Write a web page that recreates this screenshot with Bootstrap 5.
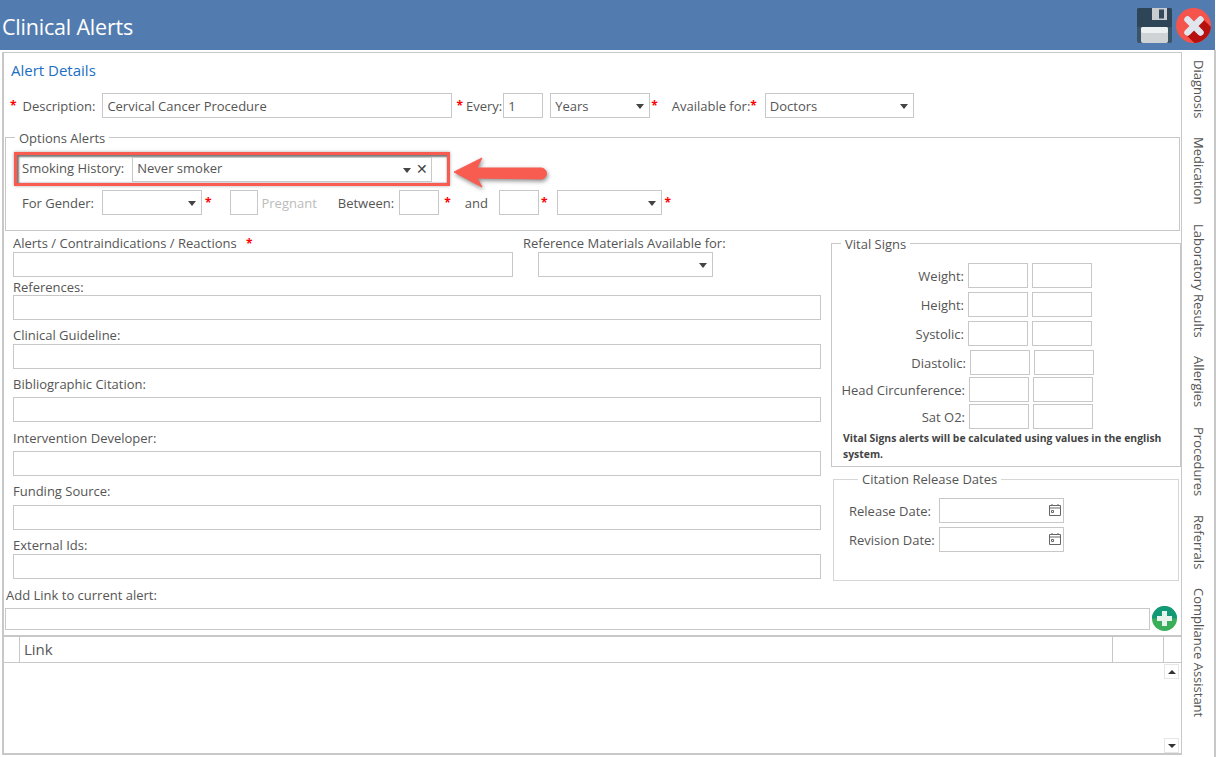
<!DOCTYPE html>
<html lang="en"><head><meta charset="utf-8"><title>Clinical Alerts</title>
<link href="https://cdn.jsdelivr.net/npm/bootstrap@5.3.0/dist/css/bootstrap.min.css" rel="stylesheet">
<style>
html,body{height:757px;overflow:hidden}
body{background:#fff;font-family:"Open Sans","Noto Sans",sans-serif;font-size:13px;color:#555;width:1216px;position:relative}
.top-bar{height:50px;width:1215px;background:#527cb0;color:#fff;font-size:21.5px;padding-left:2px}
.top-title{line-height:53px;letter-spacing:-.2px}
.top-icons{gap:4px;padding:8px 4px 0 0}
.work{height:707px}
.panel{width:1180px;height:703px;margin:2px 0 0 2px;border:1px solid #c8c8c8;border-bottom:2px solid #c8c8c8;border-left-width:2px;position:relative;flex:none}
.side{width:34px;height:707px;border-right:2px solid #c8c8c8;padding-top:10px;gap:19px;font-size:13px;line-height:30px;flex:none}
.side span{writing-mode:vertical-rl;display:block;width:30px;margin-left:2px}
.head-link{color:#1b6ec2;font-size:15px;margin:7px 0 0 7px;height:20px;line-height:20px}
.fx{display:flex;align-items:center;white-space:nowrap}
.fx>span:not(.req){margin-top:2px}
.fld{border:1px solid #c8c8c8;background:#fff;height:25px;line-height:25px;padding-left:4px;position:relative;flex:none;color:#555}
.caret::after{content:"";position:absolute;right:5px;top:10px;border:4px solid transparent;border-top:5px solid #444;border-bottom:0}
.req{color:#f00;font-weight:700;font-size:12px;line-height:14px;flex:none}
.row1{margin:13px 0 0 5px;height:25px}
.group-box{border:1px solid #c8c8c8;position:relative}
.box-title{position:absolute;top:-8px;background:#fff;padding:0 4px;line-height:16px;white-space:nowrap}
.opts{margin:19px 0 0 1px;width:1175px;height:94px}
.hl-row{position:relative;width:436px;height:34px;margin:14px 0 0 8px;border:3px solid #f85c50;box-shadow:inset 1px 1px 2px 1px #777,0 0 3px #aaa;padding-left:5px}
.hl-row>span:not(.req){margin-top:0}
.hl-row .fld{height:25px;line-height:21px;margin-left:8px;width:300px}
.x-mark{position:absolute;right:3px;top:0;font-size:14px;color:#444}
.caret-b::after{right:20px}
.row2{margin:4px 0 0 16px;height:25px}
.arrow{position:absolute;left:449px;top:102px;filter:drop-shadow(1px 2px 2px rgba(0,0,0,.45))}
.left-col{width:826px;flex:none;position:relative;padding-left:9px}
.lab{height:15px;line-height:15px}
.wide{width:808px}
.right-col{margin-left:1px;flex:none}
.vit{width:350px;height:224px;margin-top:12px;padding-top:19px}
.vit-row{height:25px;justify-content:flex-end;width:260px;margin-bottom:4px}
.vit-row .fld{width:60px;margin-left:4px}
.vit-d{width:262px;margin-bottom:2px}
.vit-h{width:261px;margin-bottom:2px}
.note{font-size:10.4px;font-weight:700;color:#444;line-height:15.500px;margin:0 0 0 11px;width:330px}
.cit{width:346px;height:102px;margin:12px 0 0 2px;padding:18px 0 0 15px;border-color:#d6d6d6}
.cit .box-title{top:-9px}
.date-row{height:25px;margin-bottom:4px}
.date-row .fld{width:125px}
.cal{position:absolute;right:1px;top:4px}
.add-lab{margin:6px 0 0 2px;height:16px;line-height:16px}
.add-row{margin:3px 0 0 1px;height:25px}
.add-row .fld{width:1145px;height:22px}
.tbl{margin:4px 0 0 0;width:1177px;height:120px;border-top:2px solid #c8c8c8;position:relative}
.tbl-h{height:26px;border-bottom:1px solid #c8c8c8;font-size:15px}
.cell{height:25px;line-height:25px;border-right:1px solid #c8c8c8;flex:none}
.c1{width:16px}.c2{width:1093px;padding-left:4px}.c3{width:51px}
.sb{position:absolute;right:2px;width:15px;height:15px;border:1px solid #e6e6e6;background:#fff}
.sb::after{content:"";position:absolute;left:3px;top:5px;border:4px solid transparent;border-top:0;border-bottom:4px solid #333}
.sb-up{top:27px}
.sb-dn{bottom:2px}
.sb-dn::after{border-bottom:0;border-top:4px solid #333}
.w350{width:350px}.w40{width:40px}.w100{width:100px}.w149{width:149px}.w28{width:28px}.w105{width:105px}.w500{width:500px}.w175{width:175px}
.ml1{margin-left:1px}.ml2{margin-left:2px}.ml3{margin-left:3px}.ml4{margin-left:4px}.ml5{margin-left:5px}.ml6{margin-left:6px}.ml7{margin-left:7px}.ml8{margin-left:8px}.ml9{margin-left:9px}.ml10{margin-left:10px}.ml11{margin-left:11px}.ml14{margin-left:14px}.ml19{margin-left:19px}.ml21{margin-left:21px}
.t0{margin-top:0}.t1{margin-top:1px}.t3{margin-top:3px}.t5{margin-top:5px}.t6{margin-top:6px}.t8{margin-top:8px}.t9{margin-top:9px}
.muted-lab{color:#bbb}
.ref-lab{position:absolute;left:519px;top:5px}
.ref-sel{position:absolute;left:534px;top:21px}
</style></head>
<body>
<div class="top-bar d-flex justify-content-between">
  <div class="top-title">Clinical Alerts</div>
  <div class="top-icons d-flex align-items-start">
    <svg width="35" height="35" viewBox="0 0 35 35"><rect width="35" height="35" rx="2" fill="#3a5568"/><path d="M2 0h13v12h15V0h3a2 2 0 0 1 2 2v17H0V2a2 2 0 0 1 2-2z" fill="#2e4557"/><rect x="15" y="0" width="15" height="12" fill="#c9cdd0"/><rect x="22" y="1.500" width="5" height="9" fill="#34495e"/><rect x="4" y="19" width="27" height="16" rx="2" fill="#cfd3d5"/><rect x="4" y="19" width="27" height="6" rx="2" fill="#ecf0f1"/></svg>
    <svg width="35" height="35" viewBox="0 0 35 35"><defs><clipPath id="closeclip"><circle cx="17.500" cy="17.500" r="17.500"/></clipPath></defs><circle cx="17.500" cy="17.500" r="17.500" fill="#f5544c"/><path clip-path="url(#closeclip)" d="M25 9 44 28 28 44 9 26z" fill="#b7110e"/><path d="M11.500 11.500 24.500 24.500M24.500 11.500 11.500 24.500" stroke="#e1e5ee" stroke-width="6.500" stroke-linecap="round" fill="none"/></svg>
  </div>
</div>
<div class="work d-flex">
  <div class="panel">
    <div class="head-link">Alert Details</div>
    <div class="fx row1">
      <span class="req ml1">*</span><span class="ml6">Description:</span><div class="fld w350 ml7">Cervical Cancer Procedure</div>
      <span class="req ml4">*</span><span class="ml3">Every:</span><div class="fld w40 ml1">1</div>
      <div class="fld w100 ml7 caret">Years</div><span class="req ml1">*</span>
      <span class="ml14">Available for:</span><span class="req">*</span><div class="fld w149 ml8 caret">Doctors</div>
    </div>
    <div class="group-box opts">
      <div class="box-title ml9">Options Alerts</div>
      <div class="fx hl-row"><span>Smoking History:</span><div class="fld caret caret-b">Never smoker<span class="x-mark">✕</span></div></div>
      <div class="fx row2">
        <span>For Gender:</span><div class="fld w100 ml8 caret"></div><span class="req ml3">*</span>
        <div class="fld w28 ml19"></div><span class="muted-lab ml3">Pregnant</span>
        <span class="ml21">Between:</span><div class="fld w40 ml5"></div><span class="req ml5">*</span>
        <span class="ml14">and</span><div class="fld w40 ml11"></div><span class="req ml2">*</span>
        <div class="fld w105 ml10 caret"></div><span class="req ml2">*</span>
      </div>
    </div>
    <svg class="arrow" width="100" height="36" viewBox="0 0 100 36"><path d="M1 17 29 3 24 13 88 13a5.500 5.500 0 0 1 0 11L24 23 29 32z" fill="#f85c50" stroke="#f85c50" stroke-linejoin="round"/></svg>
    <div class="d-flex">
      <div class="left-col">
        <div class="lab t5">Alerts / Contraindications / Reactions <span class="req ml6">*</span></div>
        <div class="fld w500 t1"></div>
        <div class="lab ref-lab">Reference Materials Available for:</div>
        <div class="fld w175 caret ref-sel"></div>
        <div class="lab t3">References:</div>
        <div class="fld wide t0"></div>
        <div class="lab t8">Clinical Guideline:</div>
        <div class="fld wide t1"></div>
        <div class="lab t8">Bibliographic Citation:</div>
        <div class="fld wide t5"></div>
        <div class="lab t9">Intervention Developer:</div>
        <div class="fld wide t5"></div>
        <div class="lab t8">Funding Source:</div>
        <div class="fld wide t6"></div>
        <div class="lab t8">External Ids:</div>
        <div class="fld wide t1"></div>
      </div>
      <div class="right-col">
        <div class="group-box vit">
          <div class="box-title ml9">Vital Signs</div>
          <div class="fx vit-row"><span>Weight:</span><div class="fld"></div><div class="fld"></div></div>
          <div class="fx vit-row"><span>Height:</span><div class="fld"></div><div class="fld"></div></div>
          <div class="fx vit-row"><span>Systolic:</span><div class="fld"></div><div class="fld"></div></div>
          <div class="fx vit-row vit-d"><span>Diastolic:</span><div class="fld"></div><div class="fld"></div></div>
          <div class="fx vit-row vit-h"><span>Head Circunference:</span><div class="fld"></div><div class="fld"></div></div>
          <div class="fx vit-row vit-h"><span>Sat O2:</span><div class="fld"></div><div class="fld"></div></div>
          <div class="note">Vital Signs alerts will be calculated using values in the english system.</div>
        </div>
        <div class="group-box cit">
          <div class="box-title ml9">Citation Release Dates</div>
          <div class="fx date-row"><span>Release Date:</span><div class="fld ml8"><svg class="cal" width="14" height="14" viewBox="0 0 14 14" fill="none" stroke="#666"><path d="M1.500 2.500h11v10h-11zM1.500 5h11M4 1v2M10 1v2M3.500 7.500h2v2h-2z"/></svg></div></div>
          <div class="fx date-row"><span>Revision Date:</span><div class="fld ml4"><svg class="cal" width="14" height="14" viewBox="0 0 14 14" fill="none" stroke="#666"><path d="M1.500 2.500h11v10h-11zM1.500 5h11M4 1v2M10 1v2M3.500 7.500h2v2h-2z"/></svg></div></div>
        </div>
      </div>
    </div>
    <div class="add-lab">Add Link to current alert:</div>
    <div class="fx add-row"><div class="fld"></div><svg class="ml2" width="25" height="25" viewBox="0 0 25 25"><circle cx="12.500" cy="12.500" r="12.500" fill="#3bae5c"/><path d="M0 12.500a12.500 12.500 0 0 1 25 0z" fill="#129a76"/><path d="M10 5h5v5h5v5h-5v5h-5v-5H5v-5h5z" fill="#e8f3ee"/></svg></div>
    <div class="tbl">
      <div class="d-flex tbl-h"><div class="cell c1"></div><div class="cell c2">Link</div><div class="cell c3"></div></div>
      <div class="sb sb-up"></div><div class="sb sb-dn"></div>
    </div>
  </div>
  <div class="side d-flex flex-column">
    <span>Diagnosis</span><span>Medication</span><span>Laboratory Results</span><span>Allergies</span><span>Procedures</span><span>Referrals</span><span>Compliance Assistant</span>
  </div>
</div>
</body></html>
